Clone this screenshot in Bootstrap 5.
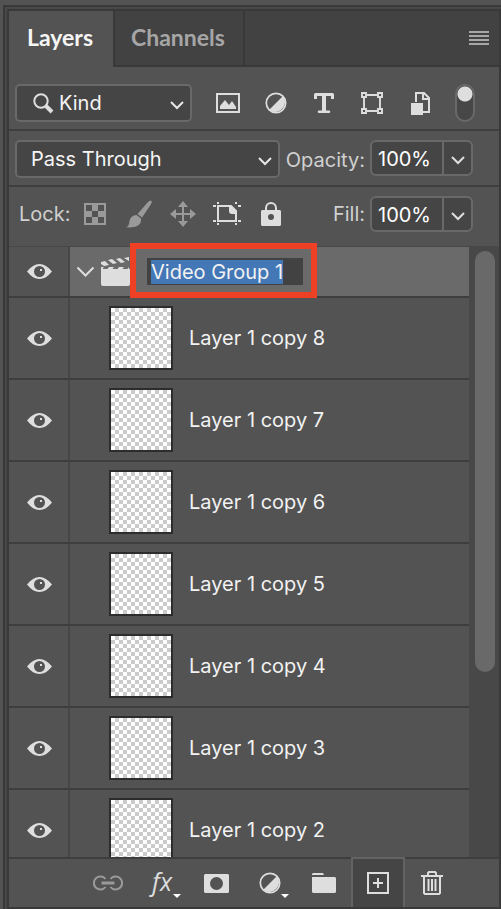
<!DOCTYPE html>
<html lang="en">
<head>
<meta charset="utf-8">
<meta name="viewport" content="width=device-width, initial-scale=1">
<title>Layers</title>
<link href="https://cdn.jsdelivr.net/npm/bootstrap@5.3.0/dist/css/bootstrap.min.css" rel="stylesheet">
<style>
:root{--pane:#535353;--line:#3e3e3e;--field:#454545;--edge:#696969;--ink:#dedede;--dim:#9a9a9a}
body{background:var(--pane);color:#f2f2f2;font-family:Inter,"Liberation Sans",sans-serif;font-size:20px;line-height:24px}
svg{display:block;flex:none}
button{color:var(--ink);background:none;border:0;padding:0}
.app{border-top:5px solid var(--pane);border-left:3px solid var(--pane)}
.frame-outer{border:solid #393939;border-width:2px 0 0 2px;background:#484848;padding:2px 0 0 2px}
.panel{border:2px solid #393939;background:var(--pane)}
.tabs{background:#424242;border-bottom:2px solid #393939}
.tabs .tab{font:700 23px/26px Lato,"Open Sans",sans-serif;color:#a6a6a6;height:54px;padding:0 18px 2px 16px;border-right:2px solid #393939}
.tabs .tab.active{background:var(--pane);color:#f5f5f5;height:56px;margin-bottom:-2px;padding:0 20px 4px 18px}
.tabs .menu{color:#a6a6a6;margin-right:10px}
.bar{border-bottom:2px solid var(--line);padding:9px 26px 7px 6px}
.bar.filters{padding:17px 24px 7px 6px}
.bar.locks{border-bottom:1px solid #484848;padding-bottom:14px}
.form-select{height:38px;width:auto;border:2px solid var(--edge);border-radius:5px;color:#f5f5f5;font-size:20px;line-height:24px;padding:0 34px 0 14px;background:var(--field) url("data:image/svg+xml,%3Csvg xmlns='http://www.w3.org/2000/svg' width='14' height='9'%3E%3Cpath d='M1 1l6 6 6-6' fill='none' stroke='%23e6e6e6' stroke-width='2'/%3E%3C/svg%3E") no-repeat right 6px top 15px}
.kind{width:177px}
.kind .form-select{padding-left:42px}
.kind svg{left:18px;top:9px}
.tool{width:48px;height:38px}
.locks .tool{width:44px;height:36px}
.off{color:var(--dim)}
.toggle{appearance:none;width:20px;height:38px;margin:0 0 0 11px;border:2px solid var(--edge);border-radius:10px;background:radial-gradient(circle at 50% 8px,#dedede 7px,#dedede00 8px),#474747}
.cap{color:#d0d0d0;margin:0 5px 0 6px}
.percent{width:103px;height:36px;border:2px solid var(--edge);border-radius:6px;background:var(--field)}
.percent input{min-width:0;width:72px;border:0;border-right:2px solid var(--edge);background:none;color:#fff;padding:2px 0 0 6px}
.locks .cap:first-child{margin:0 3px 0 4px}
.layers,.rows{min-height:0}
.layer{height:82px;border-bottom:2px solid var(--line);flex:none}
.group{height:51px}
.eye{width:61px;border-right:2px solid #474747;padding-left:2px}
.group .body-cell{background:#6a6a6a}
.thumb{width:64px;height:64px;margin:0 16px 0 39px;border:2px solid #2c2c2c;background:repeating-conic-gradient(#cbcbcb 0 25%,#fff 0 50%) 0 0/8px 8px}
.twist{margin-left:6px}
.rename{width:156px;height:27px;margin-left:15px;border:0;padding:0 4px;background:#424242;color:#f2f2f2;outline:0}
.rename::selection{background:#4477b6;color:#f2f2f2}
.callout{left:121px;top:-4px;width:187px;height:55px;border:6px solid #ee4024}
.track{width:30px;background:#484848;padding:4px 0 0 2px}
.grip{width:20px;height:69.4%;border-radius:10px;background:#696969}
.actions{border-top:2px solid var(--line);height:50px;padding-left:72px}
.actions button{width:54px;position:relative}
.actions .pressed{background:#454545;border:solid #636363;border-width:2px 2px 0;margin-top:-2px}
.fx{font:italic 25px/28px "Open Sans","Noto Sans",sans-serif;margin-top:-4px}
.more{right:8px;bottom:9px}
</style>
</head>
<body>
<svg class="d-none" aria-hidden="true">
<symbol id="eye" viewBox="0 0 25 15"><path fill="currentColor" fill-rule="evenodd" d="M0 7.500C4 2.500 8 0 12.500 0S21 2.500 25 7.500C21 12.500 17 15 12.500 15S4 12.500 0 7.500ZM12.500 2a5.500 5.500 0 1 0 0 11 5.500 5.500 0 0 0 0-11Z"/><path fill="currentColor" d="M13 5h2v2h-2z"/></symbol>
<symbol id="adjust" viewBox="0 0 22 22"><circle cx="11" cy="11" r="9.700" fill="none" stroke="currentColor" stroke-width="1.700"/><path fill="currentColor" d="M18 4A10 10 0 0 1 4 18Z"/></symbol>
<symbol id="down" viewBox="0 0 14 9"><path d="M1 1l6 6 6-6" fill="none" stroke="currentColor" stroke-width="2"/></symbol>
</svg>
<div class="app vh-100 d-flex flex-column">
<div class="frame-outer flex-fill d-flex flex-column layers">
<main class="panel flex-fill d-flex flex-column layers">
<div class="tabs d-flex" role="tablist">
<button class="tab active" role="tab" aria-selected="true">Layers</button>
<button class="tab" role="tab" aria-selected="false">Channels</button>
<button class="menu ms-auto" aria-label="Panel menu"><svg width="20" height="14"><path d="M0 1h20M0 5h20M0 9h20M0 13h20" stroke="currentColor" stroke-width="2"/></svg></button>
</div>

<div class="bar filters d-flex">
<div class="kind position-relative flex-grow-1">
<select class="form-select w-100" aria-label="Filter type"><option>Kind</option></select>
<svg class="position-absolute pe-none" width="22" height="22" fill="none" stroke="#dedede"><circle cx="8" cy="8" r="6.700" stroke-width="2"/><path d="M13 13l6 6" stroke-width="4"/></svg>
</div>
<div class="d-flex ps-2 ms-1">
<button class="tool d-flex align-items-center justify-content-center" aria-label="Pixel layers"><svg width="24" height="20"><path d="M1 1h22v18H1z" fill="none" stroke="currentColor" stroke-width="2"/><path fill="currentColor" d="M4 16v-3l5-6 4 5 3-4 4 6v2z"/></svg></button>
<button class="tool d-flex align-items-center justify-content-center" aria-label="Adjustment layers"><svg width="22" height="22"><use href="#adjust"/></svg></button>
<button class="tool d-flex align-items-center justify-content-center" aria-label="Type layers"><svg width="20" height="20" fill="none" stroke="currentColor"><path d="M1.500 6V1.500h17V6" stroke-width="3" stroke-linejoin="round"/><path d="M10 1v18" stroke-width="4"/><path d="M5 18.700h10" stroke-width="2.600" stroke-linecap="round"/></svg></button>
<button class="tool d-flex align-items-center justify-content-center" aria-label="Shape layers"><svg width="22" height="22" fill="none" stroke="currentColor" stroke-width="1.900"><path d="M3 6v10M19 6v10M6 3h10M6 19h10M1 1h4v4H1zM17 1h4v4h-4zM1 17h4v4H1zM17 17h4v4h-4z"/></svg></button>
<button class="tool d-flex align-items-center justify-content-center" aria-label="Smart objects"><svg width="21" height="24"><path d="M6 11V2h8l5 5v14h-6" fill="none" stroke="currentColor" stroke-width="2"/><path d="M13 2v6h6" fill="none" stroke="currentColor" stroke-width="2"/><path d="M1 12h12v12H1z" fill="currentColor"/></svg></button>
</div>
<input class="toggle" type="checkbox" role="switch" checked aria-label="Layer filtering">
</div>

<div class="bar d-flex">
<select class="form-select flex-grow-1" aria-label="Blend mode"><option>Pass Through</option></select>
<label class="cap pt-2" for="opacity">Opacity:</label>
<div class="percent d-flex"><input id="opacity" value="100%"><button class="flex-fill d-flex align-items-center justify-content-center" aria-label="Opacity slider"><svg class="mt-1" width="14" height="9"><use href="#down"/></svg></button></div>
</div>

<div class="bar locks d-flex align-items-center">
<span class="cap">Lock:</span>
<button class="tool off d-flex align-items-center justify-content-center" aria-label="Lock transparent pixels"><svg width="22" height="22"><path d="M1 1h20v20H1z" fill="none" stroke="currentColor" stroke-width="2"/><path fill="currentColor" d="M8 2h6v6H8zM2 8h6v6H2zM14 8h6v6h-6zM8 14h6v6H8z"/></svg></button>
<button class="tool off d-flex align-items-center justify-content-center" aria-label="Lock image pixels"><svg width="26" height="28" fill="currentColor"><path d="M25.500 1c.7.700 0 2.300-1 4L16 17.500 11.500 14 22 2c1.200-1.200 2.600-1.800 3.500-1zM10.500 15l4.500 3.500c.5 3-1 6-4 7.500-3.500 1.600-7 1.500-11 1.200 2.500-1 3-2.500 3.300-5C3.800 18 6.500 15 10.500 15z"/></svg></button>
<button class="tool off d-flex align-items-center justify-content-center" aria-label="Lock position"><svg width="26" height="26"><path d="M13 4v18M4 13h18" stroke="currentColor" stroke-width="2"/><path fill="currentColor" d="M13 0l5 6H8zM13 26l5-6H8zM0 13l6-5v10zM26 13l-6-5v10z"/></svg></button>
<button class="tool d-flex align-items-center justify-content-center" aria-label="Lock artboard nesting"><svg width="28" height="24"><path d="M5 4h13l5 5v10H5zM0 4h3M25 4h3M0 19h3M25 19h3M5 0v2M23 0v2M5 21v2M23 21v2" fill="none" stroke="currentColor" stroke-width="2"/><path d="M16 4h3l4 5v3h-4q-3 0-3-3z" fill="currentColor"/></svg></button>
<button class="tool d-flex align-items-center justify-content-center" aria-label="Lock all"><svg width="20" height="24"><path d="M5 9V6a5 5 0 0 1 10 0v3" fill="none" stroke="currentColor" stroke-width="2"/><path fill="currentColor" fill-rule="evenodd" d="M1 8h18l1 1v14l-1 1H1l-1-1V9zM10 12a3 3 0 1 0 0 6 3 3 0 0 0 0-6z"/></svg></button>
<label class="cap ms-auto" for="fill">Fill:</label>
<div class="percent d-flex"><input id="fill" value="100%"><button class="flex-fill d-flex align-items-center justify-content-center" aria-label="Fill slider"><svg class="mt-1" width="14" height="9"><use href="#down"/></svg></button></div>
</div>

<section class="layers position-relative flex-fill d-flex">
<div class="rows flex-fill overflow-hidden d-flex flex-column" id="rows">
<div class="layer group d-flex">
<button class="eye d-flex align-items-center justify-content-center" aria-label="Toggle Video Group 1"><svg width="25" height="15"><use href="#eye"/></svg></button>
<div class="body-cell flex-fill d-flex align-items-center">
<button class="twist" aria-label="Collapse group"><svg width="19" height="12"><path d="M1.500 1.500l8 8 8-8" fill="none" stroke="currentColor" stroke-width="2"/></svg></button>
<svg class="ms-1" width="33" height="29" viewBox="0 0 33 29" fill="#dedede"><path d="M2 12h29v15q0 2-2 2H4q-2 0-2-2zM2 5l4-1 4 4-5 1-3-2zM9 3l4-1 5 4-4 1zM17 2l4-1 5 4-4 1zM25 1l5-1v4z"/><path d="M2 10h3l-3 4h5l3-4h5l-3 4h5l3-4h5l-3 4h5l3-4v6H2z"/></svg>
<input class="rename" id="rename" value="Video Group 1" aria-label="Group name">
</div>
</div>
</div>
<div class="track d-flex justify-content-center flex-shrink-0"><div class="grip"></div></div>
<div class="callout position-absolute pe-none"></div>
</section>

<footer class="actions d-flex flex-shrink-0">
<button class="off d-flex align-items-center justify-content-center" aria-label="Link layers"><svg width="30" height="16" fill="none" stroke="currentColor" stroke-width="2"><path d="M12.500 4A6.500 6.500 0 1 0 12.500 12M17.500 4a6.500 6.500 0 1 1 0 8"/><path d="M8.500 8h13" stroke-width="3"/></svg></button>
<button class="d-flex align-items-center justify-content-center" aria-label="Layer style"><span class="fx">fx</span><svg class="more position-absolute" width="8" height="4"><path d="M0 0h8L4 4z" fill="#fff"/></svg></button>
<button class="d-flex align-items-center justify-content-center" aria-label="Add mask"><svg width="25" height="19"><path fill="currentColor" fill-rule="evenodd" d="M1 0h23l1 1v17l-1 1H1l-1-1V1zM12.500 3a6.500 6.500 0 1 0 0 13 6.500 6.500 0 0 0 0-13z"/></svg></button>
<button class="d-flex align-items-center justify-content-center" aria-label="New adjustment layer"><svg width="22" height="22"><use href="#adjust"/></svg><svg class="more position-absolute" width="8" height="4"><path d="M0 0h8L4 4z" fill="#fff"/></svg></button>
<button class="d-flex align-items-center justify-content-center" aria-label="New group"><svg width="24" height="20"><path fill="currentColor" d="M0 2V1l1-1h10l1 2zM0 4h23l1 1v14l-1 1H1l-1-1z"/></svg></button>
<button class="pressed d-flex align-items-center justify-content-center" aria-label="New layer"><svg width="22" height="22" fill="none" stroke="currentColor" stroke-width="2"><path d="M1 1h20v20H1zM11 6v10M6 11h10"/></svg></button>
<button class="d-flex align-items-center justify-content-center" aria-label="Delete layer"><svg width="22" height="24" fill="none" stroke="currentColor" stroke-width="2"><path d="M0 5h22M3 5v17l1 1h14l1-1V5M7 5V2l1-1h6l1 1v3M7.500 8v12M11 8v12M14.500 8v12"/></svg></button>
</footer>
</main>
</div>
</div>
<script src="https://cdn.jsdelivr.net/npm/bootstrap@5.3.0/dist/js/bootstrap.bundle.min.js"></script>
<script>
const rows = document.getElementById('rows');
for (let n = 8; n > 1; n--) {
  rows.insertAdjacentHTML('beforeend', `<div class="layer d-flex">
<button class="eye d-flex align-items-center justify-content-center" aria-label="Toggle Layer 1 copy ${n}"><svg width="25" height="15"><use href="#eye"/></svg></button>
<div class="flex-fill d-flex align-items-center"><div class="thumb"></div><span>Layer 1 copy ${n}</span></div></div>`);
}
const field = document.getElementById('rename');
field.focus();
field.select();
</script>
</body>
</html>
